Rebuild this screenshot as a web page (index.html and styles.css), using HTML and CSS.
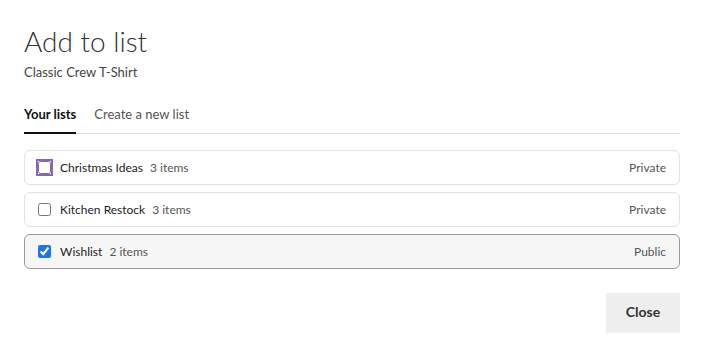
FILE: index.html
```html
<!DOCTYPE html>
<html lang="en">
<head>
  <meta charset="UTF-8" />
  <meta name="viewport" content="width=device-width, initial-scale=1.0"/>
  <title>Add to list</title>
  <link rel="stylesheet" href="styles.css">
</head>
<body>
  <div class="dialog">
    <h1 class="title">Add to list</h1>
    <p class="subtitle">Classic Crew T-Shirt</p>

    <div class="tabs">
      <button class="tab active">Your lists</button>
      <button class="tab">Create a new list</button>
    </div>

    <ul class="lists">
      <li class="list-row">
        <label class="list-label">
          <input type="checkbox" class="focused" />
          <span class="list-name">Christmas Ideas</span>
          <span class="list-count">3 items</span>
        </label>
        <span class="list-privacy">Private</span>
      </li>
      <li class="list-row">
        <label class="list-label">
          <input type="checkbox" />
          <span class="list-name">Kitchen Restock</span>
          <span class="list-count">3 items</span>
        </label>
        <span class="list-privacy">Private</span>
      </li>
      <li class="list-row selected">
        <label class="list-label">
          <input type="checkbox" checked />
          <span class="list-name">Wishlist</span>
          <span class="list-count">2 items</span>
        </label>
        <span class="list-privacy">Public</span>
      </li>
    </ul>

    <div class="actions">
      <button class="close-btn">Close</button>
    </div>
  </div>
</body>
</html>
```

FILE: styles.css
```css
* {
  margin: 0;
  padding: 0;
  box-sizing: border-box;
}

body {
  background: #fff;
  font-family: 'Lato', 'Noto Sans', sans-serif;
  color: #222;
}

.dialog {
  padding: 24px 24px 0;
}

.title {
  font-size: 28px;
  font-weight: 300;
  line-height: 34px;
  color: #333;
}

.subtitle {
  margin-top: 5px;
  font-size: 13px;
  line-height: 18px;
  color: #444;
}

.tabs {
  display: flex;
  gap: 18px;
  margin-top: 16px;
  border-bottom: 1px solid #ddd;
}

.tab {
  background: none;
  border: none;
  font-family: inherit;
  font-size: 13px;
  line-height: 18px;
  padding: 8px 0 9px;
  color: #555;
  border-bottom: 2px solid transparent;
  margin-bottom: -1px;
}

.tab.active {
  font-weight: 700;
  color: #111;
  border-bottom-color: #111;
}

.lists {
  list-style: none;
  display: flex;
  flex-direction: column;
  gap: 7px;
  margin-top: 16px;
}

.list-row {
  display: flex;
  align-items: center;
  justify-content: space-between;
  height: 35px;
  padding: 0 13px;
  border: 1px solid #e2e2e2;
  border-radius: 6px;
  font-size: 12px;
}

.list-row.selected {
  background: #f6f6f6;
  border-color: #9a9a9a;
}

.list-label {
  display: flex;
  align-items: center;
}

.list-label input {
  width: 13px;
  height: 13px;
  margin: 0 9px 0 0;
  accent-color: #1a76f0;
}

.list-label input.focused {
  outline: 2px solid #8a63bf;
  outline-offset: 0;
}

.list-name {
  color: #222;
  margin-right: 7px;
}

.list-count,
.list-privacy {
  color: #555;
}

.actions {
  display: flex;
  justify-content: flex-end;
  margin-top: 24px;
}

.close-btn {
  width: 74px;
  height: 40px;
  padding-bottom: 3px;
  background: #eee;
  border: none;
  font-family: inherit;
  font-size: 14px;
  font-weight: 700;
  color: #333;
}
```
